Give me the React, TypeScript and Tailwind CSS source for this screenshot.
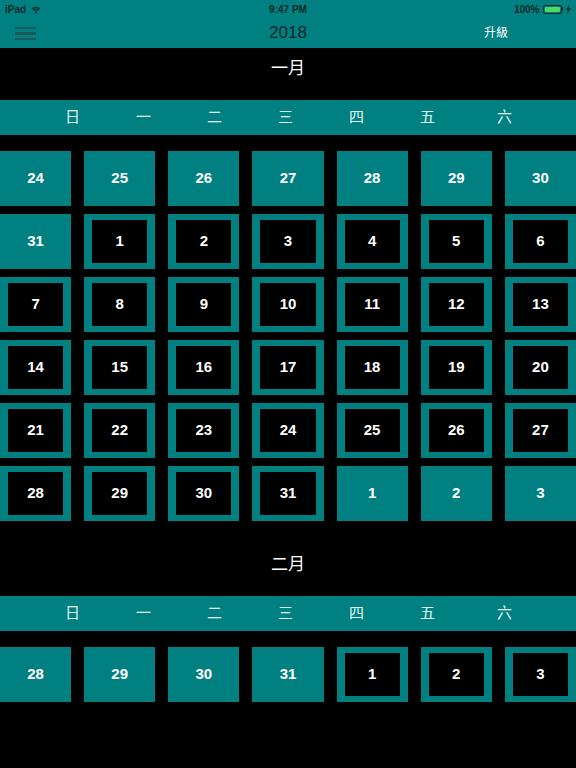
type Day = { n: number; current: boolean };

const weekdays = ["日", "一", "二", "三", "四", "五", "六"];

function buildMonth(prevTail: number[], days: number, nextHead: number[]): Day[] {
  return [
    ...prevTail.map((n) => ({ n, current: false })),
    ...Array.from({ length: days }, (_, i) => ({ n: i + 1, current: true })),
    ...nextHead.map((n) => ({ n, current: false })),
  ];
}

const january = buildMonth([24, 25, 26, 27, 28, 29, 30, 31], 31, [1, 2, 3]);
// only the first week of February is on screen
const february = buildMonth([28, 29, 30, 31], 3, []);

function StatusBar() {
  return (
    <div className="relative flex h-[18px] items-center px-[5px] text-[10px] font-semibold text-[#0b2a2a]">
      <div className="flex items-center gap-[5px]">
        <span>iPad</span>
        <svg width="10" height="8" viewBox="0 0 10 8" className="mt-[1px]">
          <path d="M1 3a6 6 0 0 1 8 0" stroke="#0b2a2a" strokeWidth="1.3" fill="none" />
          <path d="M2.6 4.6a3.6 3.6 0 0 1 4.8 0" stroke="#0b2a2a" strokeWidth="1.3" fill="none" />
          <circle cx="5" cy="6.6" r="1" fill="#0b2a2a" />
        </svg>
      </div>
      <span className="absolute left-1/2 -translate-x-1/2">9:47 PM</span>
      <div className="ml-auto flex items-center gap-[3px]">
        <span>100%</span>
        <div className="flex items-center">
          <div className="h-[9px] w-[19px] rounded-[2px] border border-[#0b2a2a] p-[1px]">
            <div className="h-full w-full rounded-[1px] bg-[#4cd964]" />
          </div>
          <div className="h-[4px] w-[1.5px] rounded-r bg-[#0b2a2a]" />
        </div>
        <svg width="5" height="9" viewBox="0 0 5 9">
          <path d="M3 0L0 5h2l-1 4 4-5.5H3z" fill="#0b2a2a" />
        </svg>
      </div>
    </div>
  );
}

function NavBar() {
  return (
    <div className="relative flex h-[30px] items-center px-[15px]">
      <div className="flex w-[21px] flex-col gap-[3px] pt-[1px]">
        <span className="h-[2.5px] bg-[#1b5856]" />
        <span className="h-[2.5px] bg-[#1b5856]" />
        <span className="h-[2.5px] bg-[#1b5856]" />
      </div>
      <span className="absolute left-1/2 -translate-x-1/2 text-[17px] text-[#0c2626]">2018</span>
      <span className="ml-auto mr-[53px] text-[12px] text-white">升級</span>
    </div>
  );
}

function WeekdayBar() {
  return (
    <div className="flex h-[35px] items-center bg-[#008080] pl-[37px] text-[15px] text-[#e2f7f7]">
      {weekdays.map((w, i) => (
        <span key={w} className={i === 6 ? "ml-[6px] w-[71px] text-center" : "w-[71px] text-center"}>
          {w}
        </span>
      ))}
    </div>
  );
}

function DayCell({ day }: { day: Day }) {
  if (!day.current) {
    return (
      <div className="flex h-[55px] items-center justify-center bg-[#008080] text-[15px] font-bold text-white">
        {day.n}
      </div>
    );
  }
  return (
    <div className="h-[55px] border-x-[8px] border-y-[6px] border-[#008080]">
      <div className="flex h-full items-center justify-center bg-black text-[15px] font-bold text-white">
        {day.n}
      </div>
    </div>
  );
}

function Month({ title, days }: { title: string; days: Day[] }) {
  return (
    <section className="pb-[23px]">
      <div className="h-[52px] pt-[10px] text-center text-[17px] leading-[22px] text-white">{title}</div>
      <WeekdayBar />
      <div className="mt-[16px] grid grid-cols-7 gap-x-[13px] gap-y-[8px]">
        {days.map((d, i) => (
          <DayCell key={i} day={d} />
        ))}
      </div>
    </section>
  );
}

export default function App() {
  return (
    <div
      className="h-[768px] overflow-hidden bg-black"
      style={{ fontFamily: '"Liberation Sans", "Noto Sans CJK TC", sans-serif' }}
    >
      <header className="bg-[#008080]">
        <StatusBar />
        <NavBar />
      </header>
      <Month title="一月" days={january} />
      <Month title="二月" days={february} />
    </div>
  );
}
